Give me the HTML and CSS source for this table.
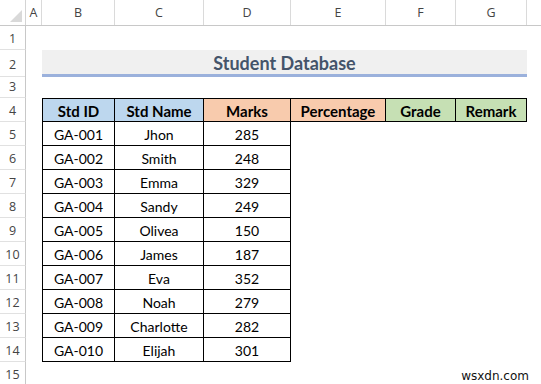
FILE: index.html
```html
<!DOCTYPE html>
<html>
<head>
<meta charset="utf-8">
<link rel="stylesheet" href="styles.css">
</head>
<body>
<div class="sheet">
  <div class="row colhdr">
    <div class="corner"><svg width="12" height="12" viewBox="0 0 12 12"><polygon points="12,0 12,12 0,12" fill="#d9d9d9"/></svg></div>
    <div class="ch">A</div><div class="ch">B</div><div class="ch">C</div><div class="ch">D</div><div class="ch">E</div><div class="ch">F</div><div class="ch">G</div><div class="ch last"></div>
  </div>
  <div class="row"><div class="rh">1</div></div>
  <div class="row"><div class="rh">2</div><div class="gap"></div><div class="title">Student Database</div></div>
  <div class="row"><div class="rh">3</div></div>
  <div class="row"><div class="rh">4</div><div class="gap"></div>
    <div class="c hd blue first">Std ID</div><div class="c hd blue">Std Name</div><div class="c hd orange">Marks</div><div class="c hd orange">Percentage</div><div class="c hd green">Grade</div><div class="c hd green">Remark</div>
  </div>
  <div class="row"><div class="rh">5</div><div class="gap"></div><div class="c first">GA-001</div><div class="c">Jhon</div><div class="c">285</div></div>
  <div class="row"><div class="rh">6</div><div class="gap"></div><div class="c first">GA-002</div><div class="c">Smith</div><div class="c">248</div></div>
  <div class="row"><div class="rh">7</div><div class="gap"></div><div class="c first">GA-003</div><div class="c">Emma</div><div class="c">329</div></div>
  <div class="row"><div class="rh">8</div><div class="gap"></div><div class="c first">GA-004</div><div class="c">Sandy</div><div class="c">249</div></div>
  <div class="row"><div class="rh">9</div><div class="gap"></div><div class="c first">GA-005</div><div class="c">Olivea</div><div class="c">150</div></div>
  <div class="row"><div class="rh">10</div><div class="gap"></div><div class="c first">GA-006</div><div class="c">James</div><div class="c">187</div></div>
  <div class="row"><div class="rh">11</div><div class="gap"></div><div class="c first">GA-007</div><div class="c">Eva</div><div class="c">352</div></div>
  <div class="row"><div class="rh">12</div><div class="gap"></div><div class="c first">GA-008</div><div class="c">Noah</div><div class="c">279</div></div>
  <div class="row"><div class="rh">13</div><div class="gap"></div><div class="c first">GA-009</div><div class="c">Charlotte</div><div class="c">282</div></div>
  <div class="row"><div class="rh">14</div><div class="gap"></div><div class="c first">GA-010</div><div class="c">Elijah</div><div class="c">301</div></div>
  <div class="row"><div class="rh">15</div><div class="wm">wsxdn.com</div></div>
</div>
</body>
</html>
```
FILE: styles.css
```css
* { box-sizing: border-box; }
html, body { margin: 0; padding: 0; background: #fff; }
body { width: 541px; height: 384px; overflow: hidden; font-family: "Lato", "Open Sans", sans-serif; color: #000; }
.sheet { display: flex; flex-direction: column; }
.row {
  display: grid;
  grid-template-columns: 26px 16px 73px 89px 87px 95px 70px 71px 1fr;
  height: 24px;
}
.colhdr { height: 26px; border-bottom: 1px solid #c8c8c8; }
.corner { border-right: 1px solid #d4d4d4; display: flex; align-items: flex-end; justify-content: flex-end; padding: 0 3px 3px 0; }
.ch {
  border-right: 1px solid #dadada;
  display: flex; align-items: center; justify-content: center;
  font-family: "Open Sans", sans-serif; font-size: 12.5px; color: #444;
}
.ch.last { border-right: none; }
.rh {
  border-right: 1px solid #c8c8c8; border-bottom: 1px solid #e1e1e1;
  display: flex; align-items: center; justify-content: center;
  font-family: "Open Sans", sans-serif; font-size: 12.5px; color: #444;
  padding-top: 2px;
}
.title {
  grid-column: span 6;
  background: #f0f0f0;
  border-bottom: 3px solid #9bb1dc;
  display: flex; align-items: center; justify-content: center;
  font-weight: bold; font-size: 18px; color: #44546a;
  padding-top: 2px;
}
.c {
  border-right: 1px solid #000; border-bottom: 1px solid #000;
  display: flex; align-items: center; justify-content: center;
  font-size: 14px; padding-top: 1px;
}
.c.first { border-left: 1px solid #000; }
.hd { border-top: 1px solid #000; font-weight: bold; font-size: 15px; }
.blue { background: #bdd7ee; }
.orange { background: #f8cbad; }
.green { background: #c6e0b4; }
.wm {
  grid-column: 7 / span 3;
  display: flex; align-items: center; justify-content: flex-end;
  padding-right: 12px; padding-top: 3px;
  font-family: "DejaVu Sans", sans-serif; font-size: 12px; color: #111;
}
```
